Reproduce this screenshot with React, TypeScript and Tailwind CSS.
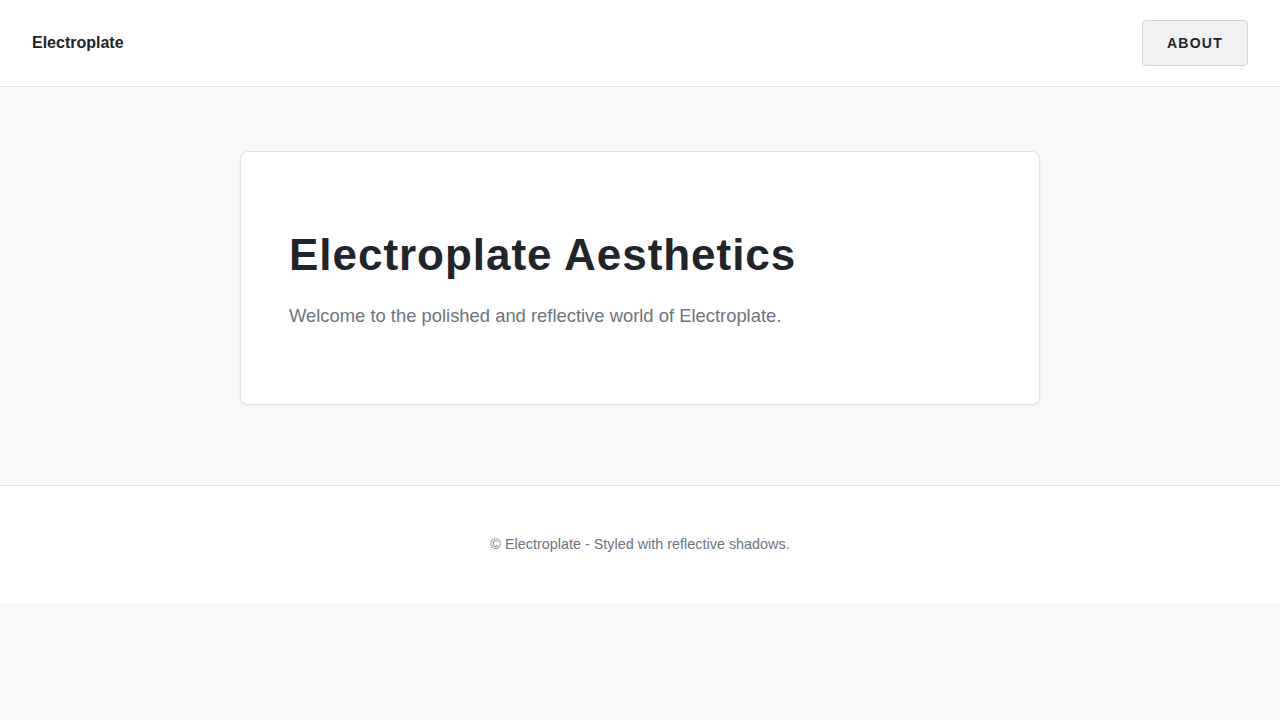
import React from "react";

export default function App() {
  return (
    <div className="min-h-screen bg-[#f7f8fa] font-['Liberation_Sans',Arial,sans-serif]">
      <header className="flex items-center justify-between bg-white px-8 py-5 border-b border-[#e2e5e9]">
        <div className="text-base font-bold text-[#212529]">Electroplate</div>
        <button className="rounded border border-[#d1d5db] bg-[#f0f1f3] px-6 py-3 text-sm leading-5 font-bold tracking-[0.09em] text-[#212529]">
          ABOUT
        </button>
      </header>
      <main className="flex justify-center pt-16 pb-20">
        <div className="w-[800px] rounded-lg border border-[#dee2e6] bg-white px-12 pt-[77px] pb-[74px] shadow-[0_1px_3px_rgba(0,0,0,0.06)]">
          <h1 className="mb-5 text-[44px] leading-[1.2] font-bold tracking-[0.022em] text-[#212529]">
            Electroplate Aesthetics
          </h1>
          <p className="text-[1.15rem] leading-7 text-[#6c757d]">
            Welcome to the polished and reflective world of Electroplate.
          </p>
        </div>
      </main>
      <footer className="border-t border-[#e2e5e9] bg-white py-12 text-center">
        <p className="text-[0.9rem] leading-[21px] text-[#6c757d]">© Electroplate - Styled with reflective shadows.</p>
      </footer>
    </div>
  );
}
